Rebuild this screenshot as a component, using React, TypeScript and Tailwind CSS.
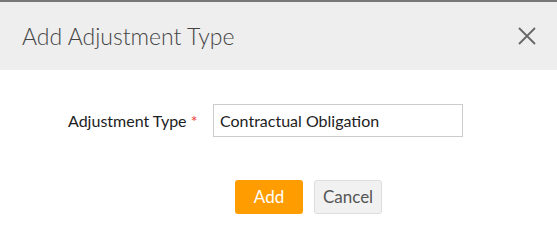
import React from "react";

export default function App() {
  return (
    <div className="w-[557px] h-[245px] bg-white border-t-2 border-[#777777] font-['Lato',sans-serif] overflow-hidden">
      <div className="h-[68px] bg-[#eeeeee] flex items-center justify-between pl-[22px] pr-[20px]">
        <h1 className="text-[23px] font-light text-[#444444] leading-none">Add Adjustment Type</h1>
        <svg width="18" height="18" viewBox="0 0 18 18" className="mr-[1px]">
          <path d="M1 1 L17 17 M17 1 L1 17" stroke="#666666" strokeWidth="1.8" />
        </svg>
      </div>
      <div className="flex items-center pt-[34px] pl-[68px]">
        <label className="text-[16px] text-[#222222] w-[145px]">
          Adjustment Type <span className="text-[#e33]">*</span>
        </label>
        <input
          className="w-[250px] h-[33px] border border-[#cccccc] px-[6px] text-[16px] text-[#222222] outline-none font-['Lato',sans-serif]"
          defaultValue="Contractual Obligation"
        />
      </div>
      <div className="flex gap-[11px] pt-[43px] pl-[235px]">
        <button className="w-[68px] h-[34px] bg-[#ff9d00] rounded-[3px] text-white text-[17px]">Add</button>
        <button className="w-[68px] h-[34px] bg-[#f1f1f1] border border-[#dddddd] rounded-[3px] text-[#555555] text-[17px]">Cancel</button>
      </div>
    </div>
  );
}
